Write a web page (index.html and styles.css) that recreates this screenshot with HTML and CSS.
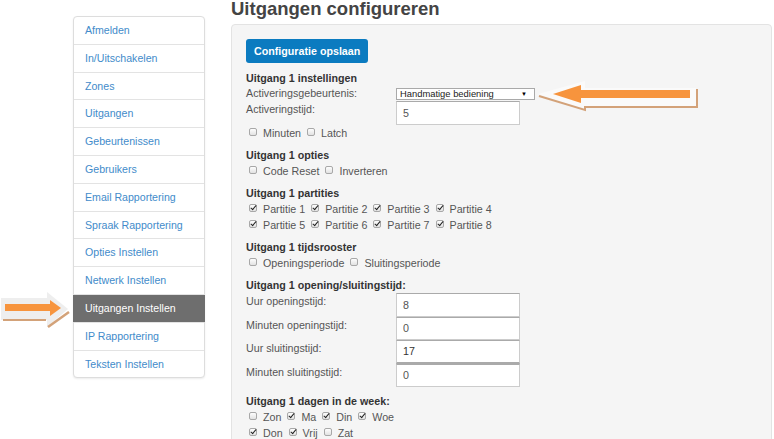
FILE: index.html
```html
<!DOCTYPE html>
<html lang="nl">
<head>
    <meta charset="UTF-8">
    <meta name="viewport" content="width=device-width, initial-scale=1.0">
    <title>Uitgangen configureren</title>
    <link rel="stylesheet" href="styles.css">
</head>
<body>

    <div class="page">
        <aside class="sidebar">
            <ul class="menu">
                <li><a href="#">Afmelden</a></li>
                <li><a href="#">In/Uitschakelen</a></li>
                <li><a href="#">Zones</a></li>
                <li><a href="#">Uitgangen</a></li>
                <li><a href="#">Gebeurtenissen</a></li>
                <li><a href="#">Gebruikers</a></li>
                <li><a href="#">Email Rapportering</a></li>
                <li><a href="#">Spraak Rapportering</a></li>
                <li><a href="#">Opties Instellen</a></li>
                <li><a href="#">Netwerk Instellen</a></li>
                <li class="active"><a href="#">Uitgangen Instellen</a></li>
                <li><a href="#">IP Rapportering</a></li>
                <li><a href="#">Teksten Instellen</a></li>
            </ul>
        </aside>

        <main class="content">
            <h1>Uitgangen configureren</h1>
            <form class="panel" id="outputForm">
                <button type="submit" class="btn-save">Configuratie opslaan</button>

                <section class="group">
                    <h3>Uitgang 1 instellingen</h3>
                    <div class="field">
                        <label for="event">Activeringsgebeurtenis:</label>
                        <span class="select-wrap">
                            <select id="event" name="event">
                                <option>Handmatige bediening</option>
                                <option>Alarm</option>
                                <option>Inschakelen</option>
                            </select>
                        </span>
                    </div>
                    <div class="field">
                        <label for="activeTime">Activeringstijd:</label>
                        <input type="text" id="activeTime" name="activeTime" value="5">
                    </div>
                    <div class="checks">
                        <label><input type="checkbox" name="minutes">Minuten</label>
                        <label><input type="checkbox" name="latch">Latch</label>
                    </div>
                </section>

                <section class="group">
                    <h3>Uitgang 1 opties</h3>
                    <div class="checks">
                        <label><input type="checkbox" name="codeReset">Code Reset</label>
                        <label><input type="checkbox" name="invert">Inverteren</label>
                    </div>
                </section>

                <section class="group">
                    <h3>Uitgang 1 partities</h3>
                    <div class="checks">
                        <label><input type="checkbox" checked>Partitie 1</label>
                        <label><input type="checkbox" checked>Partitie 2</label>
                        <label><input type="checkbox" checked>Partitie 3</label>
                        <label><input type="checkbox" checked>Partitie 4</label>
                    </div>
                    <div class="checks">
                        <label><input type="checkbox" checked>Partitie 5</label>
                        <label><input type="checkbox" checked>Partitie 6</label>
                        <label><input type="checkbox" checked>Partitie 7</label>
                        <label><input type="checkbox" checked>Partitie 8</label>
                    </div>
                </section>

                <section class="group">
                    <h3>Uitgang 1 tijdsrooster</h3>
                    <div class="checks">
                        <label><input type="checkbox" name="openPeriod">Openingsperiode</label>
                        <label><input type="checkbox" name="closePeriod">Sluitingsperiode</label>
                    </div>
                </section>

                <section class="group">
                    <h3>Uitgang 1 opening/sluitingstijd:</h3>
                    <div class="field time">
                        <label for="openHour">Uur openingstijd:</label>
                        <input type="text" id="openHour" value="8">
                    </div>
                    <div class="field time">
                        <label for="openMin">Minuten openingstijd:</label>
                        <input type="text" id="openMin" value="0">
                    </div>
                    <div class="field time">
                        <label for="closeHour">Uur sluitingstijd:</label>
                        <input type="text" id="closeHour" class="hovered" value="17">
                    </div>
                    <div class="field time">
                        <label for="closeMin">Minuten sluitingstijd:</label>
                        <input type="text" id="closeMin" value="0">
                    </div>
                </section>

                <section class="group">
                    <h3>Uitgang 1 dagen in de week:</h3>
                    <div class="checks">
                        <label><input type="checkbox">Zon</label>
                        <label><input type="checkbox" checked>Ma</label>
                        <label><input type="checkbox" checked>Din</label>
                        <label><input type="checkbox" checked>Woe</label>
                    </div>
                    <div class="checks">
                        <label><input type="checkbox" checked>Don</label>
                        <label><input type="checkbox" checked>Vrij</label>
                        <label><input type="checkbox">Zat</label>
                    </div>
                </section>
            </form>
        </main>

        <!-- annotation arrows drawn over the page -->
        <svg class="arrows" width="774" height="439" viewBox="0 0 774 439">
            <polygon points="1,298 47,298 47,292 68,309 47,327 47,320 1,320" fill="#eeeeee"/>
            <polyline points="3,320 46,320" stroke="#d3a279" stroke-width="2" fill="none"/>
            <polyline points="48,327 69,312" stroke="#d3a279" stroke-width="2.5" fill="none"/>
            <rect x="5" y="304" width="46" height="7" fill="#f7943d"/>
            <polygon points="50,300 61,308 50,316" fill="#f7943d"/>

            <polygon points="538,94 585,81 585,88 696,88 696,107 585,107 585,110" fill="#fafafa"/>
            <polyline points="539,96 585,110 585,107 697,107 697,89" stroke="#d3a279" stroke-width="2" fill="none"/>
            <rect x="580" y="90" width="110" height="8" fill="#f7943d"/>
            <polygon points="581,85 553,94 581,103" fill="#f7943d"/>
        </svg>
    </div>

</body>
</html>
```

FILE: styles.css
```css
body {
    margin: 0;
    font-family: "Liberation Sans", Arial, sans-serif;
    font-size: 10.7px;
    color: #555;
    background-color: #fff;
}

.page {
    position: relative;
    display: flex;
    align-items: flex-start;
    height: 439px;
    overflow: hidden;
}

.arrows {
    position: absolute;
    left: 0;
    top: 0;
    pointer-events: none;
}

.sidebar {
    flex: none;
    width: 132px;
    margin: 16px 0 0 73px;
}

.menu {
    list-style: none;
    margin: 0;
    padding: 0;
    border: 1px solid #ddd;
    border-radius: 4px;
    box-shadow: 0 1px 2px rgba(0, 0, 0, 0.08);
    background-color: #fff;
}

.menu li {
    border-top: 1px solid #e3e3e3;
}

.menu li:first-child {
    border-top: none;
}

.menu a {
    display: block;
    padding: 7px 11px;
    line-height: 12.8px;
    font-size: 10.6px;
    color: #428bca;
    text-decoration: none;
}

.menu li.active {
    margin: 0 -1px;
    background-color: #6e6e6e;
}

.menu li.active a {
    padding-left: 12px;
    color: #fff;
}

.content {
    flex: none;
    width: 541px;
    margin-left: 26px;
}

h1 {
    margin: 0 0 6px;
    font-size: 18.5px;
    line-height: 18px;
    color: #444;
}

.panel {
    min-height: 440px;
    padding: 14px;
    background-color: #f5f5f5;
    border: 1px solid #e3e3e3;
    border-radius: 4px;
}

.btn-save {
    display: block;
    height: 24px;
    padding: 0 8px;
    margin-bottom: 8px;
    border: none;
    border-radius: 3px;
    background-color: #0b7bc0;
    color: #fff;
    font: bold 10.7px "Liberation Sans", Arial, sans-serif;
    cursor: pointer;
}

.group {
    margin-bottom: 7px;
}

.group h3 {
    margin: 0;
    font-size: 10.7px;
    line-height: 15px;
    color: #333;
}

.field {
    display: flex;
    align-items: flex-start;
}

.field label {
    flex: none;
    width: 150px;
    line-height: 15px;
}

.field input[type="text"] {
    display: block;
    width: 124px;
    height: 24px;
    box-sizing: border-box;
    padding: 0 6px;
    border: 1px solid #ccc;
    border-top-color: #aaa;
    background-color: #fff;
    font: 10.7px "Liberation Sans", Arial, sans-serif;
    color: #555;
    outline: none;
}

.field input[type="text"] + label,
.field label + input[type="text"] {
    margin-top: 0;
}

.field input[type="text"] {
    margin-top: 0;
}

.field label[for="activeTime"],
.field.time label {
    padding-top: 1px;
}

.field.time input[type="text"] {
    height: 23.5px;
}

.field.time input.hovered {
    border-bottom: 2px solid #aaa;
    color: #333;
}

.select-wrap {
    position: relative;
    display: block;
    margin-top: 2px;
}

.select-wrap select {
    display: block;
    width: 139px;
    height: 12px;
    padding: 0 0 0 3px;
    border: 1px solid #a9a9a9;
    border-radius: 0;
    background-color: #fff;
    font: 9.4px "Liberation Sans", Arial, sans-serif;
    line-height: 10px;
    color: #222;
    appearance: none;
    -webkit-appearance: none;
    outline: none;
}

.select-wrap::after {
    content: "\25BC";
    position: absolute;
    right: 8px;
    top: 1px;
    font-size: 6px;
    line-height: 10px;
    color: #000;
    pointer-events: none;
}

.checks {
    line-height: 16px;
}

.checks label {
    white-space: nowrap;
}

.checks input[type="checkbox"] {
    position: relative;
    width: 8px;
    height: 8px;
    box-sizing: border-box;
    margin: 0 6px 1px 3px;
    border: 1px solid #a8a8a8;
    border-radius: 2px;
    background: linear-gradient(#fdfdfd, #e2e2e2);
    vertical-align: baseline;
    appearance: none;
    -webkit-appearance: none;
}

.checks input[type="checkbox"]:checked::after {
    content: "";
    position: absolute;
    left: 2px;
    top: -1px;
    width: 2px;
    height: 5px;
    border: solid #222;
    border-width: 0 1.5px 1.5px 0;
    transform: rotate(40deg);
}
```
